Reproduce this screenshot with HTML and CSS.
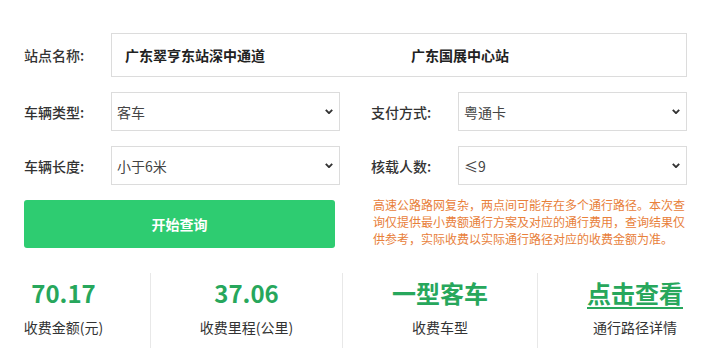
FILE: index.html
```html
<!DOCTYPE html>
<html lang="zh-CN">
<head>
    <meta charset="UTF-8">
    <meta name="viewport" content="width=device-width, initial-scale=1.0">
    <title>高速公路通行费查询</title>
    <link rel="stylesheet" href="styles.css">
</head>
<body>

<div class="query">
    <div class="row row-station">
        <span class="label">站点名称:</span>
        <div class="box station-box">
            <span class="station">广东翠亨东站深中通道</span>
            <span class="station station-end">广东国展中心站</span>
        </div>
    </div>

    <div class="row">
        <div class="field">
            <span class="label">车辆类型:</span>
            <div class="box select">客车<svg class="arrow" viewBox="0 0 10 6"><path d="M1 1l4 4 4-4"/></svg></div>
        </div>
        <div class="field">
            <span class="label">支付方式:</span>
            <div class="box select">粤通卡<svg class="arrow" viewBox="0 0 10 6"><path d="M1 1l4 4 4-4"/></svg></div>
        </div>
    </div>

    <div class="row">
        <div class="field">
            <span class="label">车辆长度:</span>
            <div class="box select">小于6米<svg class="arrow" viewBox="0 0 10 6"><path d="M1 1l4 4 4-4"/></svg></div>
        </div>
        <div class="field">
            <span class="label">核载人数:</span>
            <div class="box select">≤9<svg class="arrow" viewBox="0 0 10 6"><path d="M1 1l4 4 4-4"/></svg></div>
        </div>
    </div>

    <div class="row row-action">
        <button class="search-btn">开始查询</button>
        <p class="notice">高速公路路网复杂，两点间可能存在多个通行路径。本次查询仅提供最小费额通行方案及对应的通行费用，查询结果仅供参考，实际收费以实际通行路径对应的收费金额为准。</p>
    </div>
</div>

<div class="result">
    <div class="stat stat-first">
        <div class="value">70.17</div>
        <div class="name">收费金额(元)</div>
    </div>
    <div class="stat">
        <div class="value">37.06</div>
        <div class="name">收费里程(公里)</div>
    </div>
    <div class="stat">
        <div class="value">一型客车</div>
        <div class="name">收费车型</div>
    </div>
    <div class="stat stat-last">
        <div class="value"><a href="#" class="detail-link">点击查看</a></div>
        <div class="name">通行路径详情</div>
    </div>
</div>

</body>
</html>
```

FILE: styles.css
```css
body {
    font-family: "Noto Sans CJK SC", "Noto Sans", sans-serif;
    margin: 0;
    background-color: #fff;
    color: #333;
    width: 716px;
    height: 348px;
    overflow: hidden;
}
.query {
    padding: 33px 29px 0 24px;
}
.row {
    display: flex;
    gap: 31px;
    margin-bottom: 15px;
}
.row-station {
    gap: 0;
}
.field {
    display: flex;
    flex: 1;
}
.label {
    width: 87px;
    flex-shrink: 0;
    font-size: 14px;
    font-weight: 500;
    color: #333;
    display: flex;
    align-items: center;
}
.box {
    flex: 1;
    border: 1px solid #dcdcdc;
    box-sizing: border-box;
    display: flex;
    align-items: center;
    font-size: 14px;
}
.station-box {
    height: 44px;
    padding-left: 13px;
}
.station {
    font-weight: bold;
    color: #222;
}
.station-end {
    margin-left: 146px;
}
.select {
    height: 39px;
    padding: 0 6px 0 5px;
    color: #444;
    justify-content: space-between;
}
.arrow {
    width: 8px;
    height: 5px;
    fill: none;
    stroke: #333;
    stroke-width: 2.4;
}
.row-action {
    gap: 38px;
    margin-bottom: 0;
}
.search-btn {
    width: 311px;
    height: 48px;
    flex-shrink: 0;
    background-color: #2ecc71;
    border: none;
    border-radius: 3px;
    color: #fff;
    font-family: inherit;
    font-size: 14px;
    font-weight: bold;
    cursor: pointer;
}
.notice {
    margin: -4px 0 0;
    font-size: 12px;
    line-height: 17px;
    color: #e8803a;
}
.result {
    display: grid;
    grid-template-columns: 151px 192px 195px 1fr;
    margin-top: 25px;
}
.stat {
    border-right: 1px solid #e8e8e8;
    height: 76px;
    display: flex;
    flex-direction: column;
    align-items: center;
    padding-top: 6px;
    box-sizing: border-box;
}
.stat-first {
    padding-right: 23px;
}
.stat-last {
    border-right: none;
    padding-left: 16px;
}
.value {
    font-size: 24px;
    font-weight: bold;
    color: #27a75c;
    line-height: 28px;
}
.detail-link {
    color: #27a75c;
    text-decoration: underline;
    text-decoration-thickness: 2px;
    text-underline-offset: 4px;
}
.name {
    margin-top: 10px;
    font-size: 14px;
    color: #333;
}
```
